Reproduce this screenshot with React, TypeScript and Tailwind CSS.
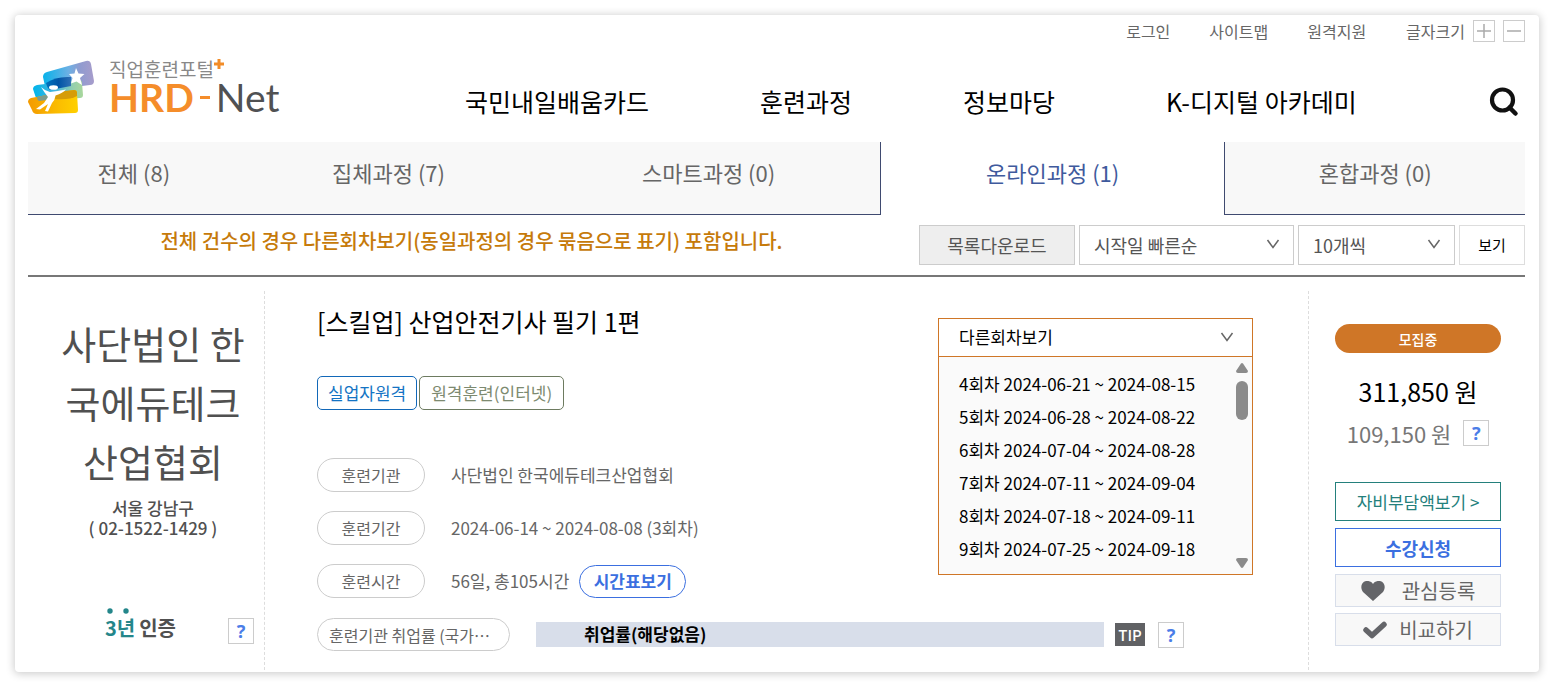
import React, { useState } from "react";

const utilityLinks = ["로그인", "사이트맵", "원격지원"];

const rounds = [
  "4회차 2024-06-21 ~ 2024-08-15",
  "5회차 2024-06-28 ~ 2024-08-22",
  "6회차 2024-07-04 ~ 2024-08-28",
  "7회차 2024-07-11 ~ 2024-09-04",
  "8회차 2024-07-18 ~ 2024-09-11",
  "9회차 2024-07-25 ~ 2024-09-18",
];

const idleTab = "border-b border-[#3f4a70] bg-[#f8f8f8] text-[#666]";

const tabs = [
  { label: "전체 (8)", style: `flex-[212] ${idleTab}` },
  { label: "집체과정 (7)", style: `flex-[298] ${idleTab}` },
  { label: "스마트과정 (0)", style: `flex-[343] border-r ${idleTab}` },
  { label: "온라인과정 (1)", style: "flex-[344] border-b border-transparent text-[#3f5a9d]" },
  { label: "혼합과정 (0)", style: `flex-[300] border-l ${idleTab}` },
];

function LogoMark() {
  return (
    <svg width="66" height="55" viewBox="0 0 66 55" aria-hidden="true">
      <defs>
        <linearGradient id="sky" x1="0" x2="1">
          <stop offset="0" stopColor="#08b2ea" />
          <stop offset="0.5" stopColor="#6cb0e4" />
          <stop offset="0.72" stopColor="#8f9bd0" />
          <stop offset="1" stopColor="#a79ccb" />
        </linearGradient>
        <linearGradient id="sea" x1="0" x2="1">
          <stop offset="0" stopColor="#00b5ec" />
          <stop offset="0.45" stopColor="#46b4dc" />
          <stop offset="0.8" stopColor="#94cfae" />
          <stop offset="1" stopColor="#a9d79b" />
        </linearGradient>
        <linearGradient id="sun" x1="0" x2="1">
          <stop offset="0" stopColor="#f39a00" />
          <stop offset="0.6" stopColor="#fbbd00" />
          <stop offset="1" stopColor="#ffd000" />
        </linearGradient>
        <linearGradient id="deep" x1="0" x2="1">
          <stop offset="0" stopColor="#0072bd" />
          <stop offset="0.5" stopColor="#0054a6" />
          <stop offset="1" stopColor="#2f6fb5" />
        </linearGradient>
      </defs>
      <path d="M19 12 58 1Q62 0 63 4L66 21Q66 25 62 25L22 30Q18 30 17 26L15 17Q15 13 19 12Z" fill="url(#sky)" />
      <path d="M9 25 51 20Q54 20 54 23L55 35Q55 38 52 38L12 41Q9 41 8 38L5 29Q5 26 9 25Z" fill="url(#sea)" />
      <path d="M18 23Q28 16 43 17V26L22 30Q19 28 18 23Z" fill="url(#deep)" />
      <path d="M3 38 46 30Q49 30 49 33L50 50Q50 53 47 53L9 54Q5 54 4 50L0 42Q0 39 3 38Z" fill="url(#sun)" />
      <path d="M28 32 46 30Q49 30 49 33V36Q42 40 27 39Z" fill="#d69c08" />
      <path d="M9 37 22 34 19 40 11 41Q9 40 9 37Z" fill="#7f9c8c" />
      <path d="m48 8 2.500 5.500 6 .500-4.500 4 2 7-5.500-3.500-5.500 2 1.500-5.500-3.500-4 5.500-.500Z" fill="#fff" />
      <ellipse cx="25.500" cy="27.500" rx="4.500" ry="2.300" fill="#fff" />
      <path d="M13 27Q17 31 22 32 29 31 38 29.500 35 33 27.500 35.500 27 40 24 43L20 51.500 17 51 20 44 12 49.500 8 49 16 43 20 37Q16 32 13 27Z" fill="#fff" />
    </svg>
  );
}

function SearchIcon() {
  return (
    <svg width="30" height="30" viewBox="0 0 30 30" fill="none" stroke="#111" aria-hidden="true">
      <circle cx="13.500" cy="13" r="10.500" strokeWidth="4.200" />
      <path d="m20.500 20.500 6 6" strokeWidth="4.500" strokeLinecap="round" />
    </svg>
  );
}

function Chevron({ className = "" }: { className?: string }) {
  return (
    <svg width="14" height="10" viewBox="0 0 14 10" fill="none" stroke="#666" strokeWidth="1.500" className={className} aria-hidden="true">
      <path d="m1.500 1 5.500 7.500L12.500 1" />
    </svg>
  );
}

function Help() {
  return (
    <button aria-label="도움말" className="flex size-[26px] shrink-0 items-center justify-center border border-[#ccc] bg-white font-['Noto_Sans',sans-serif] text-lg leading-none font-bold text-[#4b7de8]">
      ?
    </button>
  );
}

function Sort({ label, options, className }: { label: string; options: string[]; className: string }) {
  return (
    <div className={`relative ${className}`}>
      <select aria-label={label} className="h-10 w-full appearance-none border border-[#ccc] bg-white px-3.5 text-lg leading-6 text-[#555]">
        {options.map((o) => (
          <option key={o}>{o}</option>
        ))}
      </select>
      <Chevron className="pointer-events-none absolute top-3.5 right-3.5" />
    </div>
  );
}

function Term({ children }: { children: React.ReactNode }) {
  return (
    <span className="flex h-[34px] w-[108px] shrink-0 items-center justify-center rounded-full border border-[#ccc] text-base leading-6">
      {children}
    </span>
  );
}

export default function App() {
  const [active, setActive] = useState("온라인과정 (1)");

  return (
    <div className="bg-white p-[15px] font-['Noto_Sans_CJK_KR',sans-serif] text-[#666]">
      <div className="rounded-sm bg-white pr-3.5 pl-[13px] shadow-[0_1px_8px_1px_rgba(0,0,0,0.2)]">
        <header>
          <div className="flex h-[31px] items-center justify-end gap-2 text-base leading-6">
            <nav className="mr-8 flex gap-[39px]">
              {utilityLinks.map((l) => (
                <a key={l} href="#">{l}</a>
              ))}
            </nav>
            <span>글자크기</span>
            <button aria-label="글자 크게" className="flex size-[22px] items-center justify-center border border-[#ccc]">
              <svg width="16" height="16" stroke="#aaa" strokeWidth="1.500" aria-hidden="true"><path d="M8 1v14M1 8h14" /></svg>
            </button>
            <button aria-label="글자 작게" className="flex size-[22px] items-center justify-center border border-[#ccc]">
              <svg width="16" height="16" stroke="#aaa" strokeWidth="1.500" aria-hidden="true"><path d="M1 8h14" /></svg>
            </button>
          </div>

          <div className="flex h-24 items-center">
            <a href="#" className="flex w-[437px] shrink-0 items-center gap-[15px] pb-3.5">
              <LogoMark />
              <span className="flex flex-col">
                <span className="flex text-[19px] leading-5 text-[#888]">
                  직업훈련포털
                  <svg width="10" height="10" stroke="#f28c28" strokeWidth="3" aria-hidden="true"><path d="M5 0v10M0 5h10" /></svg>
                </span>
                <span className="flex items-center font-['Lato',sans-serif] text-[39px] leading-9">
                  <b className="text-[#f58d2a]">HRD</b>
                  <svg width="10" height="3" className="mx-1.5" aria-hidden="true"><path d="M0 0h10v3H0z" fill="#f58d2a" /></svg>
                  <span className="text-[#505153]">Net</span>
                </span>
              </span>
            </a>
            <nav className="flex flex-1 items-center gap-[111px] pt-3.5 text-[25px] leading-9 whitespace-nowrap text-black">
              <a href="#">국민내일배움카드</a>
              <a href="#">훈련과정</a>
              <a href="#">정보마당</a>
              <a href="#">K-디지털 아카데미</a>
            </nav>
            <button aria-label="검색" className="mr-1.5 pt-4"><SearchIcon /></button>
          </div>
        </header>

        <div role="tablist" className="flex h-[73px] text-[22px] leading-8">
          {tabs.map((t) => (
            <button
              key={t.label}
              role="tab"
              aria-selected={active === t.label}
              onClick={() => setActive(t.label)}
              className={`pb-3 ${t.style}`}
            >
              {t.label}
            </button>
          ))}
        </div>

        <div className="flex items-center gap-1 border-b-2 border-[#777] py-2.5">
          <p className="flex-1 pb-2 text-center text-xl leading-7 font-medium text-[#c67a0a]">
            전체 건수의 경우 다른회차보기(동일과정의 경우 묶음으로 표기) 포함입니다.
          </p>
          <button className="h-10 w-[156px] border border-[#ccc] bg-[#eee] text-lg leading-6 text-[#555]">목록다운로드</button>
          <Sort label="정렬" options={["시작일 빠른순", "시작일 느린순"]} className="w-[215px]" />
          <Sort label="목록 개수" options={["10개씩", "20개씩", "50개씩"]} className="w-[157px]" />
          <button className="h-10 w-[66px] border border-[#ddd] text-[15px] text-black">보기</button>
        </div>

        <main className="flex pt-3.5 pb-0.5">
          <section className="flex w-[237px] shrink-0 flex-col border-r border-dashed border-[#ddd] pt-[22px] pr-2.5 pb-[26px] pl-6 text-center text-[#505050]">
            <h2 className="text-[38px] leading-[59px] break-all">사단법인 한국에듀테크산업협회</h2>
            <p className="mt-2 text-[17px] leading-5 font-medium">
              서울 강남구
              <br />( 02-1522-1429 )
            </p>
            <div className="mt-auto flex items-end justify-end gap-[52px]">
              <span className="flex items-end gap-1 pb-0.5 text-xl leading-7 font-bold">
                <span className="flex flex-col text-[#24868a]">
                  <svg width="30" height="6" fill="#24868a" aria-hidden="true"><circle cx="5" cy="3" r="2.700" /><circle cx="21" cy="3" r="2.700" /></svg>
                  <span className="leading-7">3년</span>
                </span>
                인증
              </span>
              <Help />
            </div>
          </section>

          <section className="min-w-0 flex-1 pt-3 pr-[55px] pl-[52px]">
            <div className="flex items-start justify-between">
              <div>
                <h1 className="text-[25px] leading-9 text-black">[스킬업] 산업안전기사 필기 1편</h1>
                <div className="mt-[37px] flex gap-0.5 text-[17px] leading-6">
                  <span className="flex h-[34px] items-center rounded-[5px] border border-[#1268b8] px-2.5 text-[#1474c4]">실업자원격</span>
                  <span className="flex h-[34px] items-center rounded-[5px] border border-[#6d7b60] px-[11px] text-[#7d8a70]">원격훈련(인터넷)</span>
                </div>
                <dl className="mt-12 flex flex-col gap-[19px] text-[17px] leading-6">
                  <div className="flex items-center gap-[26px]">
                    <dt><Term>훈련기관</Term></dt>
                    <dd>사단법인 한국에듀테크산업협회</dd>
                  </div>
                  <div className="flex items-center gap-[26px]">
                    <dt><Term>훈련기간</Term></dt>
                    <dd>2024-06-14 ~ 2024-08-08 (3회차)</dd>
                  </div>
                  <div className="flex items-center gap-[26px]">
                    <dt><Term>훈련시간</Term></dt>
                    <dd className="flex items-center gap-2.5">
                      56일, 총105시간
                      <button className="h-[33px] w-[107px] rounded-full border border-[#3b6fe0] font-bold text-[#3b6fe0]">시간표보기</button>
                    </dd>
                  </div>
                </dl>
              </div>

              <div className="mt-[15px] w-[315px] text-[17px] leading-6 text-black">
                <button aria-expanded="true" className="flex h-[39px] w-full items-center justify-between border border-[#cf7627] pr-[18px] pb-0.5 pl-5">
                  다른회차보기
                  <Chevron />
                </button>
                <div className="flex h-[218px] justify-between border border-t-0 border-[#cf7627] bg-[#fafafa] pr-1 pl-5">
                  <ul className="flex flex-col pt-2.5">
                    {rounds.map((r) => (
                      <li key={r} className="leading-[33px]">{r}</li>
                    ))}
                  </ul>
                  <div className="flex flex-col items-center py-1.5" aria-hidden="true">
                    <svg width="12" height="10" fill="#8b8b8b"><path d="M6 0q1 0 2 2l4 6q0 2-2 2H2q-2 0-2-2l4-6q1-2 2-2Z" /></svg>
                    <span className="mt-2 h-[39px] w-3 rounded-full bg-[#8b8b8b]" />
                    <svg width="12" height="10" fill="#8b8b8b" className="mt-auto"><path d="M6 10q-1 0-2-2L0 2q0-2 2-2h8q2 0 2 2L8 8q-1 2-2 2Z" /></svg>
                  </div>
                </div>
              </div>
            </div>

            <div className="mt-5 flex items-center pr-[69px]">
              <span className="flex h-[33px] w-[193px] shrink-0 items-center rounded-full border border-[#ccc] pl-[11px] text-base leading-6">훈련기관 취업률 (국가⋯</span>
              <span className="ml-[26px] h-[25px] flex-1 bg-[#d8deea] pl-12 text-[17px] leading-6 font-bold text-black">취업률(해당없음)</span>
              <span className="mr-[13px] ml-[11px] flex h-[23px] w-[30px] items-center justify-center bg-[#606164] text-[15px] leading-5 font-medium text-white">TIP</span>
              <Help />
            </div>
          </section>

          <aside className="flex w-[217px] shrink-0 flex-col border-l border-dashed border-[#ddd] pt-[33px] pr-6 pb-6 pl-[26px]">
            <span className="flex h-[29px] items-center justify-center rounded-full bg-[#cf7627] text-sm leading-5 font-medium text-white">모집중</span>
            <p className="mt-5 text-center text-[25px] leading-9 text-black">311,850 원</p>
            <p className="mt-2 flex items-center justify-center gap-3 text-[22px] leading-8 text-[#777]">
              109,150 원 <Help />
            </p>
            <button className="mt-[33px] h-[39px] border border-[#24807c] text-[17px] leading-6 text-[#24807c]">자비부담액보기 &gt;</button>
            <button className="mt-[7px] h-[39px] border border-[#3b6fe0] text-lg leading-6 font-bold text-[#3b6fe0]">수강신청</button>
            <button className="mt-[7px] flex h-[33px] items-center justify-center gap-[17px] border border-[#d8deea] bg-[#f8f8f8] text-xl leading-7">
              <svg width="24" height="20" viewBox="0 0 24 20" fill="#646569" aria-hidden="true"><path d="M12 20 2 11C-1 7 0 1 5 0c3-.500 6 1 7 3 1-2 4-3.500 7-3 5 1 6 7 3 11Z" /></svg>
              관심등록
            </button>
            <button className="mt-1.5 flex h-[33px] items-center justify-center gap-3 border border-[#d8deea] bg-[#f8f8f8] text-xl leading-7">
              <svg width="24" height="18" viewBox="0 0 24 18" fill="none" stroke="#646569" strokeWidth="5.500" strokeLinecap="round" strokeLinejoin="round" aria-hidden="true"><path d="m3 9 6 5.500L21 3.500" /></svg>
              비교하기
            </button>
          </aside>
        </main>
      </div>
    </div>
  );
}
